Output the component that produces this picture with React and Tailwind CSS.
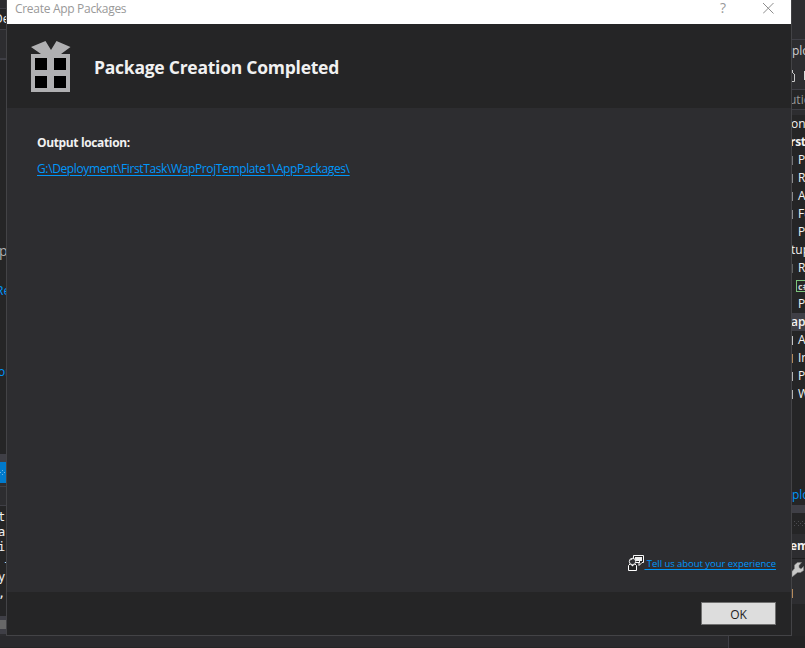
import React from "react";

const ui = "font-['Open_Sans','Noto_Sans',sans-serif]";

// One line of a panel that continues underneath the dialog.
function Row({ className = "", shift = "", children }) {
  return (
    <div className={`flex shrink-0 items-center overflow-hidden whitespace-nowrap ${className}`}>
      <span className={`shrink-0 ${shift}`}>{children}</span>
    </div>
  );
}

const tree = [
  { label: "P", mark: "bg-[#77777a]" },
  { label: "R", mark: "bg-[#8b8b8d]" },
  { label: "A", mark: "bg-[#8b8b8d]" },
  { label: "Fo", mark: "bg-[#8b8b8d]" },
  { label: "P", mark: "bg-transparent" },
];

const tree2 = [
  { label: "A", mark: "bg-[#c5c5c5]" },
  { label: "Im", mark: "bg-[#b58a5c]" },
  { label: "Pa", mark: "bg-[#b5b5b5]" },
  { label: "W", mark: "bg-[#b5b5b5]" },
];

function TreeItem({ label, mark }) {
  return (
    <div className="flex h-[18px] shrink-0 items-center gap-[5px] overflow-hidden whitespace-nowrap">
      <i className={`h-[9px] w-px shrink-0 ${mark}`} />
      <span>{label}</span>
    </div>
  );
}

function EditorStrip() {
  return (
    <aside className="flex w-[6px] shrink-0 flex-col overflow-hidden bg-[#252526] text-[12px] leading-none text-[#f1f1f1]">
      <div className="h-2 shrink-0 bg-[#2d2d30]" />
      <Row className="h-[22px] border-y border-[#3f3f46] bg-[#252526]" shift="-ml-[6px]">De</Row>
      <div className="h-7 shrink-0 bg-[#2d2d30]" />
      <div className="h-[2px] shrink-0 bg-[#3f3f46]" />
      <Row className="mt-[180px] h-[22px] text-[14px] text-[#b0b0b0]" shift="-ml-px">p</Row>
      <Row className="mt-[18px] h-[22px] text-[#0097fb]" shift="-ml-[4px]">Re</Row>
      <Row className="mt-[59px] h-[22px] text-[#0097fb]" shift="-ml-[2px]">on</Row>
      <div className="mt-[71px] h-2 shrink-0 bg-[#3f3f46]" />
      <div className="flex h-[21px] shrink-0 items-center justify-center bg-[#007acc]">
        <svg width="6" height="7" fill="#6eb5e6">
          <path d="M0 3h1v1H0zM2 1h1v1H2zM2 5h1v1H2zM4 3h1v1H4z" />
        </svg>
      </div>
      <div className="h-[23px] shrink-0 border-b border-[#3f3f46] bg-[#2d2d30] pt-[3px]">
        <div className="h-px bg-[#3f3f46]" />
      </div>
      <div className="mt-[3px] flex h-[107px] shrink-0 flex-col overflow-hidden font-['DejaVu_Sans_Mono',monospace] text-[12px]">
        <Row className="h-[15px]" shift="-ml-[2px]">t'</Row>
        <Row className="h-[15px]" shift="-ml-[2px]">a:</Row>
        <Row className="h-[15px]" shift="-ml-[2px]">i:</Row>
        <Row className="h-[15px]" shift="ml-[3px]">-</Row>
        <Row className="h-[15px]" shift="-ml-[2px]">y</Row>
        <Row className="h-[18px]" shift="-ml-[2px]">,</Row>
      </div>
      <div className="h-1 shrink-0 bg-[#3f3f46]" />
      <div className="h-[9px] shrink-0 bg-[#686868]" />
      <div className="h-[5px] shrink-0 bg-[#3f3f46]" />
      <div className="grow bg-[#2d2d30]" />
    </aside>
  );
}

function ExplorerStrip() {
  return (
    <aside className="flex w-[13px] shrink-0 flex-col overflow-hidden bg-[#252526] text-[12px] leading-none text-[#f1f1f1]">
      <div className="h-10 shrink-0 border-b border-[#3f3f46] bg-[#2d2d30]" />
      <Row className="h-[22px] bg-[#2d2d30] text-[#d0d0d0]" shift="ml-0">plo</Row>
      <div className="flex h-[27px] shrink-0 items-center justify-between bg-[#2d2d30]">
        <svg width="4" height="14" fill="none" stroke="#c8c8c8">
          <path d="M0 3l3 3M2.500 6v6.500H0M.5 1v3" />
        </svg>
        <i className="h-[9px] w-px bg-[#d8d8d8]" />
      </div>
      <Row className="h-[21px] border-y border-[#3f3f46] bg-[#252526] text-[#999999]" shift="-ml-[3px]">utio</Row>
      <div className="h-[5px] shrink-0 bg-[#2d2d30]" />
      <Row className="h-[18px]" shift="-ml-px">on</Row>
      <Row className="h-[18px] font-bold" shift="-ml-[2px] tracking-[-0.3px]">rstT</Row>
      {tree.map((t, i) => <TreeItem key={i} {...t} />)}
      <Row className="h-[18px]" shift="-ml-px">tup</Row>
      <TreeItem label="R" mark="bg-[#606060]" />
      <div className="flex h-[18px] shrink-0 items-center overflow-hidden pl-1">
        <span className="flex h-3 w-4 shrink-0 items-center border border-[#7cc47c] pl-px text-[9px] font-bold text-[#d0d0d0]">c#</span>
      </div>
      <TreeItem label="P" mark="bg-transparent" />
      <Row className="h-[18px] bg-[#3f3f46] font-semibold" shift="-ml-px">apP</Row>
      {tree2.map((t, i) => <TreeItem key={i} {...t} />)}
      <Row className="mt-[81px] h-[21px] text-[#0097fb]" shift="ml-0">plo</Row>
      <div className="h-2 shrink-0 bg-[#3f3f46]" />
      <div className="flex h-[21px] shrink-0 items-center justify-end">
        <svg width="11" height="7" fill="#4b4b50">
          <path d="M0 1h1v1H0zM4 1h1v1H4zM8 1h1v1H8zM2 3h1v1H2zM6 3h1v1H6zM10 3h1v1h-1zM0 5h1v1H0zM4 5h1v1H4zM8 5h1v1H8z" />
        </svg>
      </div>
      <Row className="h-[25px] border-b border-[#1f1f20] bg-[#2d2d30] font-bold" shift="-ml-[2px]">em</Row>
      <div className="flex h-[45px] shrink-0 flex-col bg-[#2d2d30]">
        <svg className="mt-px shrink-0" width="13" height="18" viewBox="0 0 13 18">
          <path d="M0 11.500l2.500-3V5l3-2.500h4L7 5.500v2l2 1.500 2.500-2.500v4L8.500 12.500H5.500L0 17z" fill="#c8c8c8" stroke="#858585" strokeWidth=".6" />
        </svg>
        <i className="mt-[11px] h-[9px] w-px bg-[#b58a5c]" />
      </div>
    </aside>
  );
}

function Gift() {
  return (
    <svg className="shrink-0" width="40" height="52" viewBox="0 0 40 52">
      <path d="M0 6L14.500 0 20 9 25.500 0 39.500 6 30 13H39V51H0V13H10z" fill="#b0b0b2" />
      <path d="M4 17h12v12H4zM23 17h12v12H23zM4 35h12v12H4zM23 35h12v12H23z" fill="#000" shapeRendering="crispEdges" />
    </svg>
  );
}

function FeedbackIcon() {
  return (
    <svg className="-mt-[2px] shrink-0" width="16" height="16" viewBox="0 0 16 16">
      <path d="M5.500.5h10v7H14L11 10.500V7.500H5.500z" fill="#252526" stroke="#f6f6f6" />
      <path d="M7 2h7v4h-2v2H11V6H7z" fill="#f1f1f1" />
      <path d="M.5 15.500V10.500L2 9h5l1.500 1.500v5z" fill="#252526" stroke="#fff" />
      <circle cx="4.500" cy="6.500" r="3.200" fill="#303033" stroke="#f6f6f6" />
      <path d="M2 5.500Q3 2.800 5.500 3.600L4 4.500z" fill="#f6f6f6" />
      <path d="M3 10h3l-1.500 1.500z" fill="#fff" />
    </svg>
  );
}

function Dialog() {
  return (
    <section className="flex w-[786px] shrink-0 flex-col border-x border-b border-[#434346] bg-[#2d2d30]">
      <header className="flex h-6 shrink-0 items-start bg-white text-[#999999]">
        <span className="ml-2 grow text-[12px] leading-[18px] tracking-[-0.3px]">Create App Packages</span>
        <span className="mr-[37px] text-[14px] leading-[16px]">?</span>
        <svg className="mr-[17px] mt-[3px]" width="11" height="11" fill="none" stroke="#8c8c8c">
          <path d="M0 0l10.500 10.500M10.500 0L0 10.500" />
        </svg>
      </header>
      <div className="flex h-[84px] shrink-0 items-start bg-[#252526] pl-6 pt-[17px]">
        <Gift />
        <h1 className="ml-[23px] mt-[13px] whitespace-nowrap text-[17.5px] font-bold leading-[26px] tracking-[-0.25px] text-[#f1f1f1]">
          Package Creation Completed
        </h1>
      </div>
      <main className="flex grow flex-col items-start pl-[30px] pr-[15px] pt-[26px]">
        <strong className="text-[12px] leading-[18px] tracking-[-0.36px] text-[#f1f1f1]">Output location:</strong>
        <a className="mt-2 whitespace-nowrap text-[12px] leading-[18px] tracking-[-0.375px] text-[#0097fb] underline underline-offset-2">
          G:\Deployment\FirstTask\WapProjTemplate1\AppPackages\
        </a>
        <div className="mb-[20px] mt-auto flex items-center self-end text-[#0097fb]">
          <FeedbackIcon />
          <a className="whitespace-pre text-[9.5px] leading-[16px] tracking-[-0.05px] underline underline-offset-2">{" Tell us about your experience"}</a>
        </div>
      </main>
      <footer className="flex h-[43px] shrink-0 items-start justify-end bg-[#252526] pr-[15px] pt-[10px]">
        <button className="flex h-[23px] w-[75px] items-center justify-center border border-[#707070] bg-[#dddddd] pt-[2px] text-[12px] tracking-[-0.2px] text-[#1e1e1e]">
          OK
        </button>
      </footer>
    </section>
  );
}

export default function App() {
  return (
    <div className={`flex h-[648px] w-[805px] flex-col overflow-hidden bg-[#2d2d30] ${ui}`}>
      <div className="flex h-[636px] shrink-0">
        <EditorStrip />
        <Dialog />
        <ExplorerStrip />
      </div>
      <div className="flex h-3 shrink-0">
        <div className="w-[728px] border-b border-[#252526] bg-[#2a2a2d]" />
        <div className="grow border-l border-[#3f3f46] bg-[#232324]" />
      </div>
    </div>
  );
}
